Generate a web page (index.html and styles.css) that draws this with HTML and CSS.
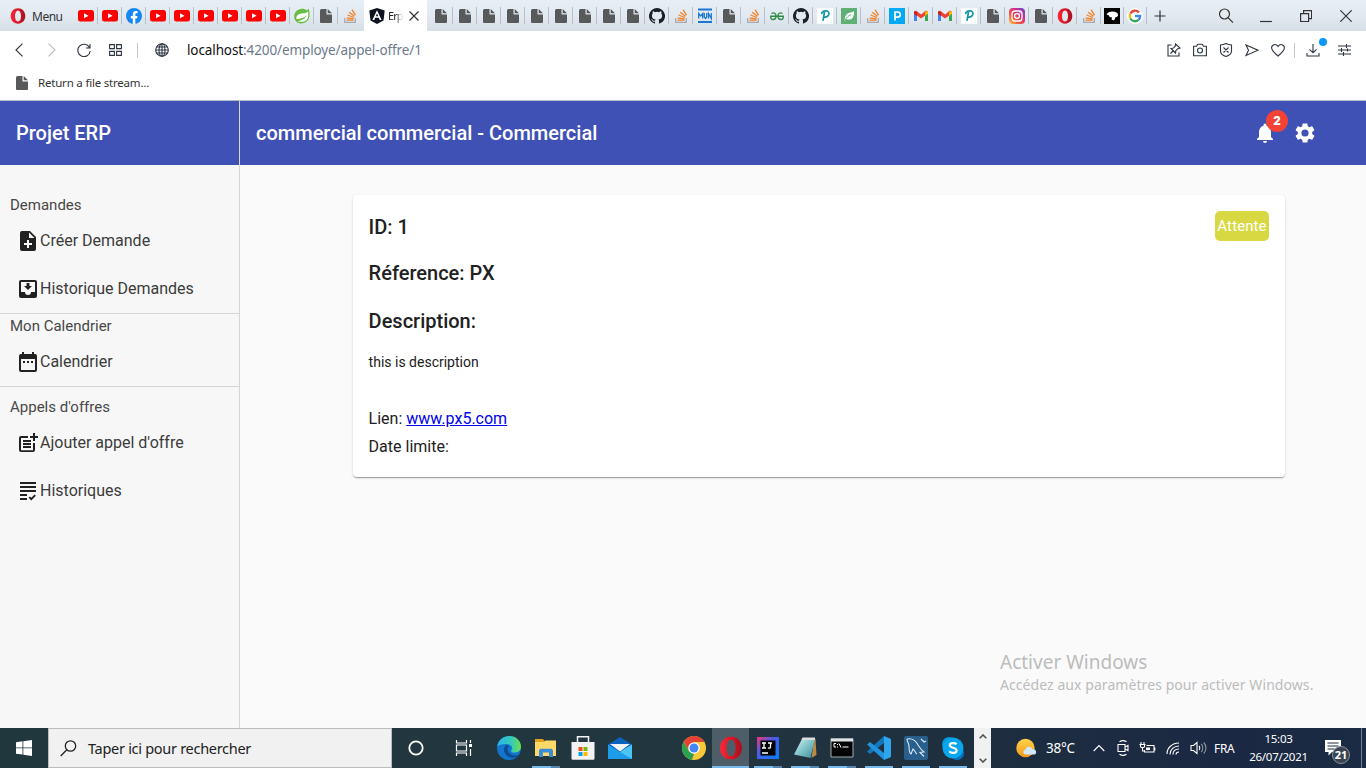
FILE: index.html
```html
<!DOCTYPE html>
<html lang="fr">
<head>
<meta charset="utf-8">
<title>Erp</title>
<link rel="stylesheet" href="styles.css">
</head>
<body>
<svg class="sprite" aria-hidden="true">
<defs>
<linearGradient id="gIg" x1="0" y1="1" x2="1" y2="0"><stop offset="0" stop-color="#fdc64b"/><stop offset=".35" stop-color="#f5533d"/><stop offset=".65" stop-color="#d22d8d"/><stop offset="1" stop-color="#5b4bd6"/></linearGradient>
<linearGradient id="gOp" x1="0" x2="1"><stop offset="0" stop-color="#ff2636"/><stop offset="1" stop-color="#a80f1c"/></linearGradient>
<linearGradient id="gEdge" x1="0" x2="1"><stop offset="0" stop-color="#2ab6ea"/><stop offset=".6" stop-color="#36c9b8"/><stop offset="1" stop-color="#6be04a"/></linearGradient>
<linearGradient id="gIj" x1="0" x2="1" y2="1"><stop offset="0" stop-color="#f4316d"/><stop offset=".4" stop-color="#4a5be8"/><stop offset="1" stop-color="#087cfa"/></linearGradient>
<linearGradient id="gNote" x1="0" y1="0" x2="1" y2="1"><stop offset="0" stop-color="#e5f5f4"/><stop offset=".5" stop-color="#7fc4cb"/><stop offset="1" stop-color="#3d8c9a"/></linearGradient>
<linearGradient id="gSun" y2="1" x2="0"><stop offset="0" stop-color="#ffd34a"/><stop offset="1" stop-color="#f59a1b"/></linearGradient>
</defs>
<symbol id="yt" viewBox="0 0 16 16"><rect y="2" width="16" height="11.400" rx="2.500" fill="#f00"/><path d="M6 5.200v5L10.600 7.700z" fill="#fff"/></symbol>
<symbol id="fb" viewBox="0 0 16 16"><circle cx="8" cy="8" r="8" fill="#1486f5"/><path d="M6.800 16v-5.600H4.800V8h2V6.200c0-2 1.200-3.100 3-3.100.9 0 1.800.2 1.800.2v2h-1c-1 0-1.300.6-1.300 1.200V8h2.200l-.4 2.400H9.300V16z" fill="#fff"/></symbol>
<symbol id="spring" viewBox="0 0 16 16"><path d="M14.500.5c1.800 5 1.500 10-1.500 12.800-3 2.700-7.500 2.700-10.300.6C-.5 11.500-.7 6.500 2 3.500 5 .3 10 0 13 2.500z" fill="#68bd45"/><path d="M14 3.500c.8 4 .3 7-1.700 8.700-2.300 2-6 1.600-9.300 1.300 4-.7 8-2.500 9.700-6.500-2.400 2.700-5.700 3.800-10 4.300C1.500 8.500 3.500 5.800 7.500 5.400c3-.3 5-.3 6.500-1.900z" fill="#fff"/></symbol>
<symbol id="file" viewBox="0 0 16 16"><path d="M3.500 1h5v5.500H14V14a1 1 0 0 1-1 1H3a1 1 0 0 1-1-1V2.500A1.500 1.500 0 0 1 3.500 1zM9.700 1L14 5.300H9.700z" fill="#58595b"/></symbol>
<symbol id="so" viewBox="0 0 16 16"><path d="M2.700 10v4.400h10.600V10" fill="none" stroke="#a6abb3" stroke-width="1.300"/><path d="M4.500 12.200h7M4.700 9.800l6.800 1M5.500 7l6.500 2.500M7.200 4.200l5.300 4M10 1.700l3.500 5.500" stroke="#f48024" stroke-width="1.300"/></symbol>
<symbol id="ng" viewBox="0 0 16 16"><path d="M8 0l7.700 2.500-1.200 10L8 16l-6.500-3.500-1.200-10z" fill="#0d1420"/><path d="M8 2.200l4.600 9.800h-1.900l-.9-2.200H6.200L5.300 12H3.400zM8 5.400L6.800 8.300h2.400z" fill="#fff"/></symbol>
<symbol id="gh" viewBox="0 0 16 16"><path fill="#1b1f2a" d="M8 0a8 8 0 0 0-2.530 15.590c.4.070.55-.170.55-.380v-1.490c-2.230.48-2.690-.94-2.690-.94-.36-.92-.89-1.170-.89-1.170-.73-.5.050-.49.050-.49.8.060 1.230.83 1.230.83.72 1.220 1.870.87 2.330.66.070-.52.28-.87.51-1.070-1.780-.2-3.640-.89-3.640-3.950 0-.87.31-1.590.82-2.150-.08-.2-.36-1.020.08-2.120 0 0 .67-.21 2.200.82a7.600 7.600 0 0 1 4 0c1.530-1.040 2.200-.82 2.200-.82.44 1.100.16 1.920.08 2.120.51.56.82 1.270.82 2.150 0 3.070-1.870 3.750-3.650 3.950.29.25.54.73.54 1.480v2.190c0 .21.15.46.55.38A8 8 0 0 0 8 0z"/></symbol>
<symbol id="mvn" viewBox="0 0 16 16"><path d="M1 1.500h14M1 14h14" stroke="#1976d2" stroke-width="1.800"/><path d="M1.700 10.500V5.500l2 2.500 2-2.500v5M7.300 5v4l1.200 1.500L9.700 9V5M11.500 10.500V5.500l2.800 5V5" fill="none" stroke="#1976d2" stroke-width="1.300"/></symbol>
<symbol id="gfg" viewBox="0 0 16 16"><path d="M1 8.200h14M2.500 5.500C5 4 7 5.500 7 8s-1.300 3.500-3 3.500S1.400 10 1.800 8.200M13.500 5.500C11 4 9 5.500 9 8s1.300 3.500 3 3.500 2.600-1.500 2.200-3.300" fill="none" stroke="#2f8d46" stroke-width="1.400"/></symbol>
<symbol id="pw" viewBox="0 0 16 16"><path d="M0 0h16v16H0z" fill="#fff"/><path d="M7.500 4L6 12.800M4.500 6.200C5 3.500 7 2.700 9 2.800c2.500.2 3.500 2 2.700 4-.8 1.900-3 2.500-5 2.200" fill="none" stroke="#1495ae" stroke-width="1.700"/></symbol>
<symbol id="leaf" viewBox="0 0 16 16"><path d="M0 0h16v16H0z" fill="#5fb074"/><path d="M13 3c.2 5-1 8-4.500 8.500-1.200.1-2.200-.1-3-.6L3.500 13C4 8 5.500 5.500 8.500 4.800 10.500 4.300 12 4 13 3z" fill="#fff"/><path d="M4 12c1.500-2.500 3.300-4 6-5.500" stroke="#5fb074" fill="none"/></symbol>
<symbol id="pb" viewBox="0 0 16 16"><path d="M0 0h16v16H0z" fill="#03a9f4"/><path d="M6 12.500V4h2.700a2.500 2.500 0 0 1 0 5.200H6" fill="none" stroke="#fff" stroke-width="1.700"/></symbol>
<symbol id="gm" viewBox="0 0 16 16"><path d="M1 4v9h3V7z" fill="#4285f4"/><path d="M15 4v9h-3V7z" fill="#34a853"/><path d="M1 3.500l2-1 5 4 5-4 2 1v2L8 10.500 1 5.500z" fill="#ea4335"/><path d="M1 3.500V6l3 2V4z" fill="#c5221f"/><path d="M12 4.500V8l3-2.200V3.500l-1.500-.7z" fill="#fbbc04"/></symbol>
<symbol id="ig" viewBox="0 0 16 16"><rect width="16" height="16" rx="4" fill="url(#gIg)"/><rect x="3" y="3" width="10" height="10" rx="3" fill="none" stroke="#fff" stroke-width="1.300"/><circle cx="8" cy="8" r="2.400" fill="none" stroke="#fff" stroke-width="1.300"/><circle cx="11" cy="5" r=".7" fill="#fff"/></symbol>
<symbol id="op" viewBox="0 0 16 16"><path fill-rule="evenodd" d="M8 .3c4.400 0 7.300 3.500 7.300 7.700S12.400 15.700 8 15.700.7 12.200.7 8 3.600.3 8 .3zM8 2.500C6 2.500 5 5 5 8s1 5.500 3 5.500S11 11 11 8 10 2.500 8 2.500z" fill="url(#gOp)"/></symbol>
<symbol id="blk" viewBox="0 0 16 16"><path d="M0 0h16v16H0z"/><path d="M2.500 6.500c1-2 3-3 6-3C12 3.500 14 5 14 7c0 1.500-1 2-2.500 2.300L10 12.500l-2.500-1 .5-2C6 9.500 5 8.500 5 7.500z" fill="#fff"/></symbol>
<symbol id="gg" viewBox="0 0 16 16"><circle cx="8" cy="8" r="8" fill="#fff"/><g fill="none" stroke-width="2.300"><path d="M12 4.500A5.200 5.200 0 0 0 3.400 5.600" stroke="#ea4335"/><path d="M3.400 5.600a5.200 5.200 0 0 0 0 4.800" stroke="#fbbc05"/><path d="M3.400 10.400a5.200 5.200 0 0 0 8.100 1.500" stroke="#34a853"/><path d="M11.500 11.900A5.200 5.200 0 0 0 13.200 8H8" stroke="#4285f4"/></g></symbol>
</svg>

<header class="tabstrip">
  <div class="menu"><svg class="i16"><use href="#op"/></svg><span>Menu</span></div>
  <div class="tabs">
    <i class="tab"><svg><use href="#yt"/></svg></i><i class="tab"><svg><use href="#yt"/></svg></i><i class="tab"><svg><use href="#fb"/></svg></i><i class="tab"><svg><use href="#yt"/></svg></i><i class="tab"><svg><use href="#yt"/></svg></i><i class="tab"><svg><use href="#yt"/></svg></i><i class="tab"><svg><use href="#yt"/></svg></i><i class="tab"><svg><use href="#yt"/></svg></i><i class="tab"><svg><use href="#yt"/></svg></i><i class="tab"><svg><use href="#spring"/></svg></i><i class="tab"><svg><use href="#file"/></svg></i><i class="tab last"><svg><use href="#so"/></svg></i>
  </div>
  <div class="active-tab"><svg class="i16"><use href="#ng"/></svg><span class="title">Erp</span><svg class="close" viewBox="0 0 10 10"><path d="M.5.5l9 9M9.500.5l-9 9" stroke="#333" stroke-width="1.200"/></svg></div>
  <div class="tabs">
    <i class="tab"><svg><use href="#file"/></svg></i><i class="tab"><svg><use href="#file"/></svg></i><i class="tab"><svg><use href="#file"/></svg></i><i class="tab"><svg><use href="#file"/></svg></i><i class="tab"><svg><use href="#file"/></svg></i><i class="tab"><svg><use href="#file"/></svg></i><i class="tab"><svg><use href="#file"/></svg></i><i class="tab"><svg><use href="#file"/></svg></i><i class="tab"><svg><use href="#file"/></svg></i><i class="tab"><svg><use href="#gh"/></svg></i><i class="tab"><svg><use href="#so"/></svg></i><i class="tab"><svg><use href="#mvn"/></svg></i><i class="tab"><svg><use href="#file"/></svg></i><i class="tab"><svg><use href="#so"/></svg></i><i class="tab"><svg><use href="#gfg"/></svg></i><i class="tab"><svg><use href="#gh"/></svg></i><i class="tab"><svg><use href="#pw"/></svg></i><i class="tab"><svg><use href="#leaf"/></svg></i><i class="tab"><svg><use href="#so"/></svg></i><i class="tab"><svg><use href="#pb"/></svg></i><i class="tab"><svg><use href="#gm"/></svg></i><i class="tab"><svg><use href="#gm"/></svg></i><i class="tab"><svg><use href="#pw"/></svg></i><i class="tab"><svg><use href="#file"/></svg></i><i class="tab"><svg><use href="#ig"/></svg></i><i class="tab"><svg><use href="#file"/></svg></i><i class="tab"><svg><use href="#op"/></svg></i><i class="tab"><svg><use href="#so"/></svg></i><i class="tab narrow"><svg><use href="#blk"/></svg></i><i class="tab narrow"><svg><use href="#gg"/></svg></i>
  </div>
  <svg class="plus" viewBox="0 0 12 12"><path d="M6 .5v11M.5 6h11" stroke="#333" stroke-width="1.200"/></svg>
  <div class="window-controls">
    <svg width="16" height="16" viewBox="0 0 16 16"><circle cx="6.500" cy="6" r="5" /><path d="M10 9.700l5 5"/></svg>
    <svg width="12" height="16" viewBox="0 0 12 16"><path d="M0 13.500h12"/></svg>
    <svg width="12" height="12" viewBox="0 0 12 12"><path d="M.6 3.600h8v8h-8zM3.600 3.600v-3h8v8h-3"/></svg>
    <svg width="12" height="12" viewBox="0 0 12 12"><path d="M.3.300l11.400 11.400M11.700.3L.3 11.700"/></svg>
  </div>
</header>

<nav class="address">
  <div class="nav-icons">
    <svg width="8" height="14" viewBox="0 0 8 14"><path d="M7.500.7L1 7l6.500 6.300" stroke="#333"/></svg>
    <svg width="8" height="14" viewBox="0 0 8 14"><path class="dim" d="M.5.7L7 7 .5 13.300"/></svg>
    <svg width="14" height="14" viewBox="0 0 14 14"><path d="M12.500 4.500A6.200 6.200 0 1 0 13.200 8M13 1v4H9"/></svg>
    <svg width="13" height="12" viewBox="0 0 13 12"><path d="M.6.6h4.800v4H.6zM7.600.6h4.800v4H7.600zM.6 7.400h4.800v4H.6zM7.600 7.400h4.800v4H7.600z"/></svg>
    <span class="rule"></span>
    <svg width="14" height="14" viewBox="0 0 14 14"><circle cx="7" cy="7" r="6.300"/><ellipse cx="7" cy="7" rx="3" ry="6.300"/><path d="M7 .7v12.600M.7 7h12.600M1.500 4h11M1.500 10h11"/></svg>
  </div>
  <p class="url"><b>localhost</b>:4200/employe/appel-offre/1</p>
  <div class="tools">
    <svg width="14" height="14" viewBox="0 0 14 14"><path d="M4.500 2H1v11h11V9.500M3.500 10.500l3-3M8.500 1l4.500 4-2.200.7-2 2L8.500 10 4 5.500l2.500-.4 1.700-1.900z"/></svg>
    <svg width="14" height="14" viewBox="0 0 14 14"><path d="M.6 3.200h3l1.200-2h4.400l1.200 2h3v9.600H.6z"/><circle cx="7" cy="7.500" r="2.500"/></svg>
    <svg width="14" height="14" viewBox="0 0 14 14"><path d="M7 .6c2 1 3.500 1.400 5.500 1.400v6C12.500 11 10 12.500 7 13.500 4 12.500 1.500 11 1.500 8V2C3.500 2 5 1.600 7 .6zM4.500 4.500l5 5M9.500 4.500l-5 5"/></svg>
    <svg width="14" height="14" viewBox="0 0 14 14"><path d="M1 2l12 5.200L1 12.500l2.500-5.300z"/></svg>
    <svg width="14" height="14" viewBox="0 0 14 14"><path d="M7 13C3 9.700.6 7.800.6 4.800.6 1.500 5 .2 7 3.500 9 .2 13.400 1.500 13.400 4.800 13.400 7.800 11 9.700 7 13z"/></svg>
    <span class="rule"></span>
    <span class="download"><svg width="14" height="14" viewBox="0 0 14 14"><path d="M7 1v8.500M3.500 6.300L7 9.800l3.500-3.500M1 10v3h12v-3"/></svg></span>
    <svg width="13" height="14" viewBox="0 0 13 14"><path d="M0 3h13M0 7h13M0 11h13M8.500 1v4M3.500 5v4M9.500 5.500v3M5.500 9v4"/></svg>
  </div>
</nav>

<div class="bookmarks"><svg class="i16"><use href="#file"/></svg><span>Return a file stream...</span></div>

<main class="app">
  <aside class="sidebar">
    <div class="brand">Projet ERP</div>
    <h4 class="first">Demandes</h4>
    <a class="item"><svg viewBox="0 0 24 24"><path d="M14 2H6a2 2 0 0 0-2 2v16a2 2 0 0 0 2 2h12a2 2 0 0 0 2-2V8l-6-6zm2 14h-3v3h-2v-3H8v-2h3v-3h2v3h3v2zm-3-7V3.500L18.500 9H13z"/></svg><span>Créer Demande</span></a>
    <a class="item"><svg viewBox="0 0 24 24"><path d="M16 9h-2.550V6h-2.900v3H8l4 4zm3-6H5a2 2 0 0 0-2 2v14a2 2 0 0 0 2 2h14a2 2 0 0 0 2-2V5a2 2 0 0 0-2-2zm0 12h-4a3 3 0 0 1-6 0H5V5h14v10z"/></svg><span>Historique Demandes</span></a>
    <hr>
    <h4>Mon Calendrier</h4>
    <a class="item"><svg viewBox="0 0 24 24"><path d="M9 11H7v2h2v-2zm4 0h-2v2h2v-2zm4 0h-2v2h2v-2zm2-7h-1V2h-2v2H8V2H6v2H5a2 2 0 0 0-2 2v14a2 2 0 0 0 2 2h14a2 2 0 0 0 2-2V6a2 2 0 0 0-2-2zm0 16H5V9h14v11z"/></svg><span>Calendrier</span></a>
    <hr>
    <h4 class="spaced">Appels d'offres</h4>
    <a class="item"><svg viewBox="0 0 24 24"><path d="M17 19.220H5V7h7V5H5a2 2 0 0 0-2 2v12a2 2 0 0 0 2 2h12a2 2 0 0 0 2-2v-7h-2v7.220zM19 2h-2v3h-3v2h3v3h2V7h3V5h-3V2zM7 9h8v2H7zm0 3v2h8v-2H7zm0 3h8v2H7z"/></svg><span>Ajouter appel d'offre</span></a>
    <a class="item"><svg viewBox="0 0 24 24"><path d="M4 3h16v2H4zM4 7h16v2H4zM4 11h16v2H4zM4 15h7v2H4zM4 19h7v2H4zM18.600 15.500l-3.300 3.300-1.400-1.400-1.300 1.300 2.700 2.700 4.600-4.600z"/></svg><span>Historiques</span></a>
  </aside>
  <section class="content">
    <div class="toolbar">
      <h1>commercial commercial - Commercial</h1>
      <span class="bell"><svg viewBox="0 0 24 24"><path d="M12 22a2 2 0 0 0 2-2h-4a2 2 0 0 0 2 2zm6-6v-5c0-3.070-1.640-5.640-4.500-6.320V4a1.500 1.500 0 0 0-3 0v.68C7.630 5.360 6 7.920 6 11v5l-2 2v1h16v-1z"/></svg><b>2</b></span>
      <svg class="gear" viewBox="0 0 24 24"><path d="M19.140 12.940c.04-.3.060-.61.060-.94s-.02-.64-.07-.94l2.030-1.580a.49.49 0 0 0 .12-.61l-1.920-3.320a.49.49 0 0 0-.59-.22l-2.390.96a7 7 0 0 0-1.620-.94l-.36-2.540a.48.48 0 0 0-.48-.41h-3.840a.48.48 0 0 0-.47.41l-.36 2.540c-.59.240-1.130.57-1.620.94l-2.390-.96a.48.48 0 0 0-.59.22L2.740 8.870a.48.48 0 0 0 .12.610l2.030 1.580a6 6 0 0 0 0 1.880l-2.030 1.580a.49.49 0 0 0-.12.610l1.920 3.320c.12.220.37.290.59.220l2.390-.96c.5.380 1.030.7 1.620.94l.36 2.540c.05.240.24.410.48.410h3.840c.24 0 .44-.17.47-.41l.36-2.540c.59-.24 1.130-.56 1.620-.94l2.390.96c.22.080.47 0 .59-.22l1.920-3.320a.48.48 0 0 0-.12-.61zM12 15.600a3.600 3.600 0 1 1 0-7.200 3.600 3.600 0 0 1 0 7.200z"/></svg>
    </div>
    <article class="card">
      <div class="card-head"><h2>ID: 1</h2><span class="status">Attente</span></div>
      <h2 class="ref">Réference: PX</h2>
      <h2 class="desc">Description:</h2>
      <p class="text">this is description</p>
      <p class="line">Lien: <a href="#">www.px5.com</a></p>
      <p class="line">Date limite:</p>
    </article>
    <div class="watermark"><p class="wm-title">Activer Windows</p><p class="wm-text">Accédez aux paramètres pour activer Windows.</p></div>
  </section>
</main>

<footer class="taskbar">
  <div class="start"><svg width="16" height="16" viewBox="0 0 16 16"><path d="M0 2.200L6.500 1.300v6.200H0zM7.300 1.200L16 0v7.500H7.300zM0 8.300h6.500v6.300L0 13.700zM7.300 8.300H16V16l-8.700-1.200z" fill="#fff"/></svg></div>
  <div class="search"><svg width="17" height="17" viewBox="0 0 17 17"><circle cx="10.500" cy="6" r="5.200" fill="none" stroke="#222" stroke-width="1.300"/><path d="M6.800 9.700L.7 16" stroke="#222" stroke-width="1.300"/></svg><span>Taper ici pour rechercher</span></div>
  <div class="wide"><svg width="16" height="16" viewBox="0 0 16 16"><circle cx="8" cy="8" r="6.700" fill="none" stroke="#fff" stroke-width="1.800"/></svg></div>
  <div class="wide"><svg width="18" height="16" viewBox="0 0 18 16"><path d="M1.500 0v3h10V0M1.500 16v-3h10v3M1.500 5h10v6h-10zM15.500 0v3M15.500 9v7" fill="none" stroke="#fff" stroke-width="1.200"/><path d="M14 4h3v3h-3z" fill="#fff"/></svg></div>
  <div class="apps">
    <span class="app-slot"><svg viewBox="0 0 24 24"><circle cx="12" cy="12" r="12" fill="#1475cf"/><path d="M.3 10C1.500 4 6.500 0 12.500 0 19 0 24 5 24 10.500c0 4-3 6-6.500 6-2.500 0-4-1-3-2.500 2-3-1-6-5.500-6C5 8 2 9 .3 10z" fill="url(#gEdge)"/><path d="M9 9c-3.500 3-2.500 11 5 12.500 4 .8 7-1 8.300-3-3 1.700-8 1.500-10.500-2C10 14 10.500 11 12 10c-1-.8-2-1-3-1z" fill="#0c4c92"/></svg></span>
    <span class="app-slot open multi"><svg viewBox="0 0 24 24"><path d="M1 3h8l1.500 2H22v3H1z" fill="#e5a11c"/><path d="M1 6h9l1.500-1.500H22V20H1z" fill="#ffd869"/><path d="M5 21v-7l1.500-1.200h11L19 14v7h-4v-4.500H9V21z" fill="#3b8dd8"/></svg></span>
    <span class="app-slot"><svg viewBox="0 0 24 24"><path d="M6.500 7V.8h11V7" fill="none" stroke="#f5f5f5" stroke-width="1.500"/><path d="M.5 6h23v16.500a1.300 1.300 0 0 1-1.300 1.300H1.800A1.300 1.300 0 0 1 .5 22.500z" fill="#f3f3f3"/><path d="M7.500 11h4v4h-4z" fill="#f25022"/><path d="M12.500 11h4v4h-4z" fill="#7fba00"/><path d="M7.500 16h4v4h-4z" fill="#00a4ef"/><path d="M12.500 16h4v4h-4z" fill="#ffb900"/></svg></span>
    <span class="app-slot"><svg viewBox="0 0 24 24"><path d="M0 8.500L12 1l12 7.500V15H0z" fill="#0a64bd"/><path d="M0 8.500l12 7.500L24 8.500V23H0z" fill="#1e9be9"/><path d="M24 8.500V23L12 16z" fill="#4cc4f5"/><path d="M2 8h20l-10 7.500z" fill="#f0f2f5"/></svg></span>
    <span class="app-slot"></span>
    <span class="app-slot"><svg viewBox="0 0 24 24"><circle cx="12" cy="12" r="12" fill="#f9c838"/><path d="M1.600 6A12 12 0 0 1 22.400 6H12L7 15z" fill="#e34335"/><path d="M1.600 6l5.200 9L12 18l-2 5.800A12 12 0 0 1 1.600 6z" fill="#2aa14f"/><circle cx="12" cy="12" r="5.800" fill="#fff"/><circle cx="12" cy="12" r="4.500" fill="#4285f4"/></svg></span>
    <span class="app-slot open current"><svg viewBox="0 0 16 16"><use href="#op"/></svg></span>
    <span class="app-slot open multi"><svg viewBox="0 0 24 24"><path d="M1 1h22v22H1z" fill="url(#gIj)"/><path d="M4.500 4.500h15v15h-15z"/><path d="M6 7h4M8 7v5M6 12h4M12 7h4M14.500 7v4c0 1.300-1.500 1.500-2.500.8M6 17h6" fill="none" stroke="#fff" stroke-width="1.300"/></svg></span>
    <span class="app-slot open multi"><svg viewBox="0 0 24 24"><path d="M21 3h1.500l1 16-5 3z" fill="#b88a43"/><path d="M9.500 2H22l-4.500 20L1 18.500z" fill="url(#gNote)"/><path d="M9.500 1.500H22V4H8.500z" fill="#ddd"/></svg></span>
    <span class="app-slot open multi"><svg viewBox="0 0 24 24"><path d="M1 2.500h22v18.500H1z" fill="#050505" stroke="#a6acad"/><path d="M1 3h22v2.500H1z" fill="#dfe3e5"/><path d="M6 7.500H4V11h2M7.500 8v1M7.500 10.500v1M9 7.500l2 4M12.500 11h6" fill="none" stroke="#fff"/></svg></span>
    <span class="app-slot open"><svg viewBox="0 0 24 24"><path d="M17 0l7 3v18l-7 3z" fill="#2fa5ee"/><path d="M17 0v7L3 18 0 15.500z" fill="#1178bd"/><path d="M17 24v-7L3 6 0 8.500z" fill="#2094de"/></svg></span>
    <span class="app-slot open"><svg viewBox="0 0 24 24"><rect width="24" height="24" rx="2" fill="#285f8d"/><path d="M3 3c5-1 9 2 11 6 2 3 3 5 6 7l-4 .5 4 4M3 3c0 3 2 4 2 7s0 7 2 8l2-5c2 1 2 4 4 5M17 3l3 3 2-1" fill="none" stroke="#dce9f2" stroke-width="1.100"/></svg></span>
    <span class="app-slot open"><svg viewBox="0 0 24 24"><circle cx="8" cy="8" r="7" fill="#0894dd"/><circle cx="16" cy="17" r="7" fill="#0871c4"/><circle cx="12" cy="12" r="10.500" fill="#09a6ec"/><path d="M15.500 8.300C14 6.700 8.800 6.600 8.800 9.300c0 3 6.800 1.800 6.800 5.200 0 3-5.600 3-7.300.9" fill="none" stroke="#fff" stroke-width="2.200"/></svg></span>
  </div>
  <div class="scroller"><svg viewBox="0 0 8 5"><path d="M.7 4.300L4 1l3.300 3.300"/></svg><svg viewBox="0 0 8 5"><path d="M.7.7L4 4 7.300.7"/></svg></div>
  <div class="weather"><svg width="21" height="20" viewBox="0 0 21 20"><circle cx="9.500" cy="10" r="9.200" fill="url(#gSun)"/><path d="M10 16.500c-3.500 0-3.500-4.500-.5-4.700C10 8 15 7.500 16 11c5-.2 5.500 5.500 1.500 5.500z" fill="#cfe9fb"/></svg><span>38°C</span></div>
  <div class="tray">
    <svg width="12" height="8" viewBox="0 0 12 8"><path d="M.7 7L6 1.500 11.300 7"/></svg>
    <svg width="12" height="16" viewBox="0 0 12 16"><path d="M1 4.500h7v7H1zM8 7l3-1.500v5L8 9M2.500 1.800c2-1.300 5-1.300 7 0M2.500 14.200c2 1.300 5 1.300 7 0"/></svg>
    <svg width="17" height="12" viewBox="0 0 17 12"><path d="M7.500 3.500H15v6.500H5.500V8M15.800 5.500v3M2 0v2M5 0v2M.5 2.500h6M1.500 3v1.500c0 1.500 4 1.500 4 0V3M3.500 5.500V9h2"/><path d="M7 5.500h4V8H7z" class="solid"/></svg>
    <svg width="14" height="13" viewBox="0 0 14 13"><path d="M1 12C1 6 6 1 13 1M4 12.500c0-5 4-8.500 9-8.500M7 12.500C7 9 9.500 7 13 7M10 12.500c0-1.500 1-2.500 3-2.500"/></svg>
    <svg width="17" height="14" viewBox="0 0 17 14"><path d="M1 4.500h2.500L7 1.500v11L3.500 9.500H1zM9 5c1 1 1 3 0 4"/><path class="faint" d="M11.300 3c2 2 2 6 0 8M13.700 1.500c3 3 3 8 0 11"/></svg>
  </div>
  <span class="lang">FRA</span>
  <div class="clock"><span class="time">15:03</span><span class="date">26/07/2021</span></div>
  <div class="notif"><svg width="16" height="16" viewBox="0 0 16 16"><path d="M0 0h16v12H7l-3.500 3.500V12H0z" fill="#fff"/><path d="M2.500 3h11M2.500 6h11M2.500 9h7" stroke="#1c2b42"/></svg><b>21</b></div>
  <div class="edge-line"></div>
</footer>
</body>
</html>
```
FILE: styles.css
```css
* { box-sizing: border-box; }
body, h1, h2, h4, p, hr { margin: 0; }
body { width: 1366px; height: 768px; overflow: hidden; display: flex; flex-direction: column; background: #fff; font-family: "Noto Sans", sans-serif; white-space: nowrap; }
svg { display: block; flex: none; }
.sprite { position: absolute; width: 0; height: 0; }
.i16 { width: 16px; height: 16px; }

.tabstrip { height: 31px; flex: none; display: flex; align-items: center; background: linear-gradient(#e6eef6 0%, #e2e9f1 50%, #d8dee6 100%); }
.menu { width: 74px; padding-left: 10px; display: flex; align-items: center; gap: 6px; font-size: 12px; letter-spacing: -.5px; color: #333; padding-top: 1px; }
.tabs { display: flex; }
.tab { width: 24px; height: 17px; display: flex; align-items: center; padding-left: 4px; border-right: 1px solid #b3bfcb; }
.tab svg { width: 16px; height: 16px; }
.tab.last { border-color: transparent; }
.tab.narrow { width: 23px; padding-left: 3px; }
.active-tab { width: 63px; margin: 0 2px; height: 31px; padding-left: 5px; background: #fff; display: flex; align-items: center; }
.title { width: 18px; margin: 0 -1px 0 3px; font-size: 11px; letter-spacing: -.9px; background: linear-gradient(90deg, #222 45%, rgba(34,34,34,.15) 75%); -webkit-background-clip: text; background-clip: text; color: transparent; }
.close { width: 10px; height: 10px; margin-left: 4px; }
.plus { width: 12px; height: 12px; margin-left: 7px; }
.window-controls { margin-left: auto; padding-right: 14px; display: flex; align-items: center; gap: 28px; }
.window-controls svg { fill: none; stroke: #333; stroke-width: 1.2; }
.window-controls svg:first-child { margin-right: -2px; }

.address { height: 38px; flex: none; display: flex; align-items: center; padding-left: 15px; }
.address svg { fill: none; stroke: #2d3440; stroke-width: 1.1; }
.address .dim { stroke: #bbb; }
.nav-icons { display: flex; align-items: center; }
.nav-icons svg:nth-child(2) { margin-left: 25px; }
.nav-icons svg:nth-child(3) { margin-left: 21px; }
.nav-icons svg:nth-child(4) { margin-left: 18px; }
.nav-icons .rule { margin: 0 17px 0 15px; }
.rule { width: 1px; height: 15px; background: #c8c8c8; }
.url { margin-left: 18px; font-size: 13.5px; letter-spacing: -.11px; color: #6b7a8b; }
.url b { font-weight: 400; color: #111; }
.tools { margin-left: auto; padding-right: 15px; display: flex; align-items: center; gap: 12px; }
.tools .rule { margin: 0 0 0 -3px; }
.tools svg:first-child { margin-left: -1px; }
.tools .download { position: relative; margin-right: 6px; }
.download::after { content: ""; position: absolute; width: 8px; height: 8px; border-radius: 50%; background: #0a97ff; top: -5px; left: 12px; }
.bookmarks { height: 32px; flex: none; display: flex; align-items: center; padding: 0 0 4px 14px; gap: 8px; border-bottom: 1px solid #b4bcc8; font-size: 11.5px; letter-spacing: -.2px; color: #333; }

.app { height: 627px; flex: none; display: flex; font-family: Roboto, sans-serif; color: #212121; background: #fafafa; }
.sidebar { width: 240px; background: #f7f7f7; border-right: 1px solid #d6d6d6; }
.brand { height: 64px; padding-left: 16px; line-height: 64px; background: #3f51b5; color: #fff; font-size: 20px; font-weight: 500; }
.sidebar h4 { height: 24px; line-height: 24px; padding-left: 10px; font-size: 15px; font-weight: 400; color: #484848; }
.sidebar h4.first { margin-top: 28px; }
.sidebar h4.spaced { margin-top: 8px; }
.item { height: 48px; padding-left: 16px; display: flex; align-items: center; font-size: 16px; color: #3c3c3c; }
.item span { padding-bottom: 2px; }
.item svg { width: 24px; height: 24px; fill: #212121; }
.sidebar hr { border: 0; height: 1px; background: #d6d6d6; }
.content { flex: 1; }
.toolbar { height: 64px; background: #3f51b5; color: #fff; display: flex; align-items: center; padding: 0 49px 0 16px; }
.toolbar h1 { font-size: 20px; font-weight: 500; margin-right: auto; }
.toolbar svg { width: 24px; height: 24px; fill: #fff; }
.bell { position: relative; margin-right: 16px; }
.bell b { position: absolute; left: 13px; top: -11px; width: 22px; height: 22px; border-radius: 50%; background: #f44336; text-align: center; font-size: 13px; line-height: 22px; font-weight: 900; }
.card { width: 932px; height: 282px; margin: 30px 0 0 113px; padding: 16px 16px 16px 15.6px; border-radius: 4px; background: #fff; box-shadow: 0 2px 1px -1px rgba(0,0,0,.2), 0 1px 1px rgba(0,0,0,.14), 0 1px 3px rgba(0,0,0,.12); }
.card h2 { font-size: 20px; line-height: 32px; font-weight: 500; }
.card-head { display: flex; justify-content: space-between; }
.status { width: 54px; height: 30px; border-radius: 5px; background: #d8d843; color: #fff; font-size: 15px; line-height: 30px; text-align: center; letter-spacing: .1px; }
.card .ref { margin-top: 14px; }
.card .desc { margin-top: 16px; }
.text { font-size: 14px; line-height: 20px; margin: 15px 0 33px; }
.line { font-size: 16px; line-height: 28px; }
.line a { color: #0000ee; }
.watermark { margin: 172px 0 0 760px; color: #bcbcbc; font-family: "Noto Sans", sans-serif; }
.wm-title { font-size: 19px; line-height: 27px; }
.wm-text { font-size: 14px; line-height: 18px; letter-spacing: .07px; }

.taskbar { height: 40px; flex: none; display: flex; align-items: center; color: #fff; background: linear-gradient(90deg, #21373e 0%, #22363f 50%, #1e2f3f 70%, #1b2843 90%, #1b2b43 100%); }
.start { width: 48px; display: flex; justify-content: center; }
.search { width: 344px; height: 40px; border: 1px solid #bcbcbc; background: #f1f1f1; color: #222; display: flex; align-items: center; padding-left: 11px; gap: 11px; font-size: 14.5px; letter-spacing: -.29px; }
.wide { width: 48px; display: flex; justify-content: center; }
.apps { display: flex; margin-left: 2px; }
.app-slot { width: 37px; height: 40px; display: flex; align-items: center; justify-content: center; }
.app-slot svg { width: 24px; height: 24px; }
.app-slot.open { background: linear-gradient(#76b9ed, #76b9ed) center bottom / 28px 2px no-repeat; }
.app-slot.multi { background: linear-gradient(90deg, #76b9ed 19px, #5585ad 19px) center bottom / 28px 2px no-repeat; }
.app-slot.current { background: linear-gradient(#76b9ed, #76b9ed) center bottom / 37px 2px no-repeat, #4d5e68; }
.scroller { width: 17px; height: 40px; margin-left: 3px; background: #f1f1f1; display: flex; flex-direction: column; align-items: center; justify-content: space-between; padding: 6px 0 5px; }
.scroller svg { width: 8px; height: 5px; fill: none; stroke: #505050; stroke-width: 1.6; }
.weather { margin-left: 25px; width: 77px; display: flex; align-items: center; gap: 9px; font-size: 13.5px; letter-spacing: -.2px; }
.tray { display: flex; align-items: center; width: 121px; }
.tray svg { fill: none; stroke: #fff; stroke-width: 1.1; margin-right: 10px; }
.tray svg:first-child { margin-right: 12px; }
.tray .solid { fill: #fff; stroke: none; }
.tray .faint { opacity: .5; }
.lang { width: 34px; font-size: 12px; letter-spacing: -.3px; }
.clock { width: 61px; display: flex; flex-direction: column; align-items: center; font-size: 11.5px; line-height: 18px; letter-spacing: -.25px; }
.notif { position: relative; margin-left: 16px; width: 36px; }
.notif b { position: absolute; left: 7px; top: 6px; width: 18px; height: 18px; border-radius: 50%; background: #3a4450; border: 1px solid #8a929c; font-size: 11px; line-height: 16px; text-align: center; }
.edge-line { width: 1px; height: 40px; background: #77808e; }
```
